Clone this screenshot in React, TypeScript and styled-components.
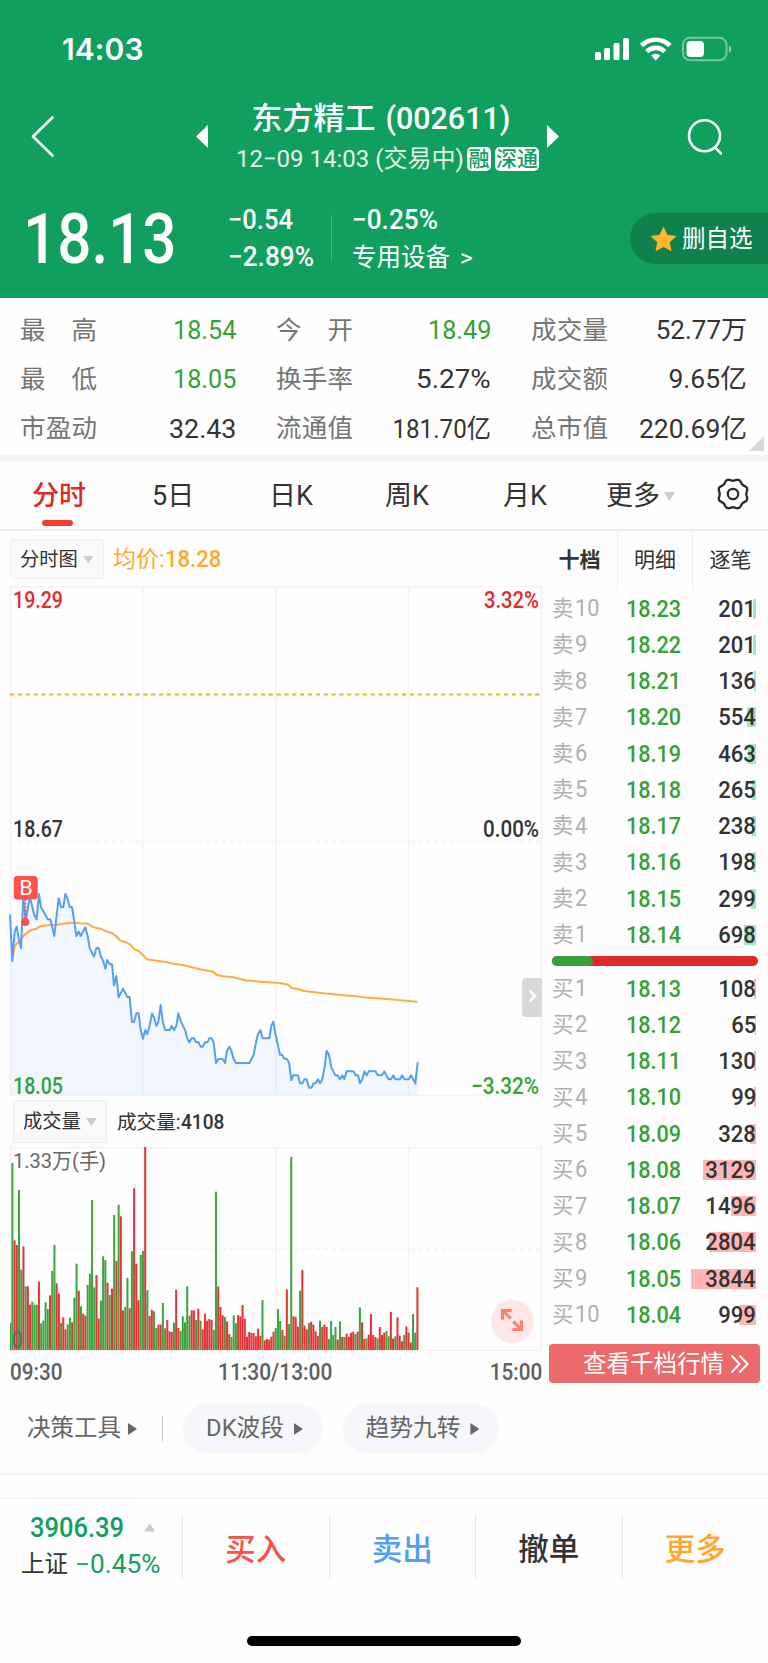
import React from 'react';
import styled, { createGlobalStyle, css } from 'styled-components';

const GREEN = '#119f5f';
const PRICE_GREEN = '#35a136';
const RED = '#e12828';
const ORANGE = '#ffa834';
const FONT = 'Roboto, "Noto Sans CJK SC", sans-serif';

const GlobalStyle = createGlobalStyle`
  * { box-sizing: border-box; }
  html, body { margin: 0; padding: 0; background: #fefefe; }
  body { font-family: ${FONT}; color: #333; }
`;

const Screen = styled.div`
  width: 768px;
  height: 1663px;
  display: flex;
  flex-direction: column;
  background: #fefefe;
  overflow: hidden;
  white-space: nowrap;
  line-height: 1;
`;

/* Narrow numerals: digits squeezed horizontally around their anchored side */
const Num = styled.span<{ $size: number; $sx?: number; $weight?: number; $right?: boolean; $color?: string }>`
  display: inline-block;
  font-size: ${p => p.$size}px;
  font-weight: ${p => p.$weight ?? 500};
  line-height: 1;
  color: ${p => p.$color ?? 'inherit'};
  transform: scaleX(${p => p.$sx ?? 1});
  transform-origin: ${p => (p.$right ? 'right' : 'left')} center;
`;

const Triangle = styled.i<{ $dir: 'down' | 'up' | 'right' | 'left'; $w: number; $h: number; $color: string }>`
  flex: none;
  width: ${p => p.$w}px;
  height: ${p => p.$h}px;
  background: ${p => p.$color};
  clip-path: ${p =>
    ({
      down: 'polygon(0 0, 100% 0, 50% 100%)',
      up: 'polygon(50% 0, 100% 100%, 0 100%)',
      right: 'polygon(0 0, 100% 50%, 0 100%)',
      left: 'polygon(100% 0, 100% 100%, 0 50%)',
    })[p.$dir]};
`;

/* ---------- header ---------- */

const Header = styled.header`
  height: 297.5px;
  flex: none;
  background: ${GREEN};
  color: #fff;
`;

const StatusBar = styled.div`
  height: 96px;
  padding: 2px 36px 0 62px;
  display: flex;
  align-items: center;
  justify-content: space-between;
`;

const Clock = styled.span`
  font: 600 30px/1 Inter, sans-serif;
  letter-spacing: 0.1px;
`;

const TitleBar = styled.div`
  height: 80px;
  padding: 0 46px 0 31px;
  display: grid;
  grid-template-columns: 165px 12px 1fr 12px 125px 38px;
  align-items: center;
`;

const TitleBlock = styled.div`
  padding-top: 2px;
  display: flex;
  flex-direction: column;
  align-items: center;
`;

const Title = styled.h1`
  margin: 0;
  font-size: 31px;
  font-weight: 500;
  line-height: 42px;
  padding-left: 7px;
`;

const Subtitle = styled.div`
  display: flex;
  align-items: center;
  height: 37px;
  padding-left: 20px;
  font-size: 24px;
  color: #e4f5ec;
`;

const Badge = styled.span`
  height: 24px;
  margin-left: 3.5px;
  padding: 0 1.2px;
  border-radius: 5px;
  background: #fff;
  color: ${GREEN};
  font-size: 21px;
  font-weight: 500;
  line-height: 24.500px;
  & + & { margin-left: 4px; }
`;

const Quote = styled.div`
  height: 121.5px;
  padding: 3.500px 0 0 23px;
  display: flex;
  align-items: center;
`;

const LastPrice = styled.div`
  width: 205px;
`;

const Pair = styled.div<{ $w: number }>`
  width: ${p => p.$w}px;
  height: 73px;
  display: flex;
  flex-direction: column;
  justify-content: space-between;
  > * { height: 36px; display: flex; align-items: center; }
`;

const QuoteDivider = styled.div`
  width: 1px;
  height: 47px;
  margin-right: 20px;
  background: #41b27f;
`;

const Sector = styled.div`
  padding-top: 3px;
  font-size: 24.5px;
  gap: 10px;
`;

const WatchButton = styled.button`
  width: 138px;
  height: 51px;
  margin-left: auto;
  padding: 0 0 0 20px;
  display: flex;
  align-items: center;
  gap: 5px;
  border: 0;
  border-radius: 26px 0 0 26px;
  background: #11804f;
  color: #fff;
  font: 400 23.5px/1 ${FONT};
  > span { padding-top: 2px; }
`;

/* ---------- key figures ---------- */

const Stats = styled.section`
  position: relative;
  height: 157.500px;
  flex: none;
  padding: 8px 20px 0 20px;
  display: grid;
  grid-template-columns: 216px 215px 216px;
  column-gap: 40px;
  grid-auto-rows: 49.3px;
`;

const Stat = styled.div`
  display: flex;
  align-items: center;
  justify-content: space-between;
  font-size: 25.5px;
`;

const StatLabel = styled.span`
  width: 77px;
  padding-top: 1px;
  display: flex;
  justify-content: space-between;
  color: #757575;
`;

const Fold = styled.i`
  position: absolute;
  right: 4px;
  bottom: 4px;
  width: 15px;
  height: 15px;
  background: #d8d8d8;
  clip-path: polygon(100% 0, 100% 100%, 0 100%);
`;

const Strip = styled.div`
  height: 6px;
  flex: none;
  background: #f1f3f8;
`;

/* ---------- period tabs ---------- */

const PeriodTabs = styled.nav`
  height: 70px;
  flex: none;
  padding: 0 18px 0 32px;
  display: grid;
  grid-template-columns: 120px 117px 116px 118px 103px 110px 34px;
  align-items: center;
  border-bottom: 2px solid #ededed;
`;

const PeriodTab = styled.div<{ $active?: boolean }>`
  position: relative;
  height: 68px;
  padding-top: 3px;
  display: flex;
  align-items: center;
  gap: 4px;
  font-size: 27px;
  color: #333;
  ${p =>
    p.$active &&
    css`
      color: ${RED};
      font-weight: 500;
      &::after {
        content: '';
        position: absolute;
        left: 10px;
        bottom: 3.500px;
        width: 31px;
        height: 6px;
        border-radius: 3px;
        background: #f63d30;
      }
    `}
`;

/* ---------- chart and order book ---------- */

const Main = styled.main`
  height: 858px;
  flex: none;
  display: flex;
`;

const ChartColumn = styled.div`
  width: 542px;
  padding-left: 10px;
  display: flex;
  flex-direction: column;
`;

const ChartBar = styled.div<{ $h: number; $left?: number; $gap: number; $top: number }>`
  height: ${p => p.$h}px;
  flex: none;
  padding: ${p => p.$top}px 0 0 ${p => p.$left ?? 0}px;
  display: flex;
  align-items: flex-start;
  gap: ${p => p.$gap}px;
`;

const Selector = styled.div<{ $h: number; $r: number }>`
  width: 94px;
  height: ${p => p.$h}px;
  padding: 1px 0 0 9px;
  display: flex;
  align-items: center;
  gap: 5px;
  border: 1px solid #efefef;
  border-radius: ${p => p.$r}px;
  background: #fafafa;
  font-size: 19.300px;
`;

const Average = styled.div`
  height: 40px;
  display: flex;
  align-items: center;
  color: ${ORANGE};
  font-size: 23px;
`;

const VolumeReadout = styled.div`
  height: 43px;
  padding-top: 2px;
  display: flex;
  align-items: center;
  font-size: 19.600px;
`;

const Plot = styled.div`
  position: relative;
  flex: none;
  > svg { display: block; overflow: visible; }
`;

const SideHandle = styled.button`
  position: absolute;
  right: 0;
  top: 392px;
  width: 20px;
  height: 39px;
  padding: 0;
  border: 0;
  border-radius: 4px 0 0 4px;
  background: #d8d8d8;
`;

const ExpandButton = styled.button`
  position: absolute;
  right: 8.500px;
  top: 152.500px;
  width: 43px;
  height: 43px;
  padding: 1px 0 0;
  border: 0;
  border-radius: 50%;
  background: #fee8e7;
`;

const TimeAxis = styled.div`
  height: 37px;
  padding-top: 6px;
  display: flex;
  align-items: center;
  justify-content: space-between;
  color: #5f5f5f;
`;

const AxisMiddle = styled.span`
  padding-left: 10px;
`;

const Book = styled.aside`
  width: 226px;
  display: flex;
  flex-direction: column;
`;

const BookTabs = styled.div`
  height: 59.5px;
  flex: none;
  display: grid;
  grid-template-columns: 75px 75px 76px;
`;

const BookTab = styled.div<{ $active?: boolean }>`
  display: flex;
  align-items: center;
  justify-content: center;
  font-size: 21px;
  font-weight: ${p => (p.$active ? 700 : 400)};
  color: #333;
  & + & { border-left: 1px solid #eee; }
`;

const BookRow = styled.div`
  height: 36.250px;
  flex: none;
  padding: 0 12px 0 10px;
  display: grid;
  grid-template-columns: 74px 60px 70px;
  align-items: center;
`;

const Level = styled.span`
  display: flex;
  align-items: center;
  gap: 1px;
  color: #b0b0b0;
  font-size: 21.5px;
`;

const Quantity = styled.span`
  position: relative;
  height: 20px;
  display: flex;
  align-items: center;
  justify-content: flex-end;
  > span { position: relative; }
`;

const Depth = styled.i<{ $sell: boolean }>`
  position: absolute;
  right: 0;
  top: 0;
  height: 20px;
  background: ${p => (p.$sell ? '#a4e6c4' : '#ffb5b3')};
`;

const Balance = styled.div`
  height: 10px;
  flex: none;
  margin: 2.500px 10px 5px;
  border-radius: 5px;
  overflow: hidden;
  display: flex;
  background: ${RED};
  &::before {
    content: '';
    width: 20%;
    border-radius: 0 5px 5px 0;
    background: ${PRICE_GREEN};
  }
`;

const DepthButton = styled.button`
  width: 211px;
  height: 39px;
  margin: 11px 0 0 7px;
  padding: 0 11px 0 0;
  display: flex;
  align-items: center;
  justify-content: flex-end;
  gap: 6px;
  border: 0;
  border-radius: 4px;
  background: #ec6a6a;
  color: #fff;
  font: 400 23.500px/1 ${FONT};
  > span { padding-top: 3px; }
`;

/* ---------- tools ---------- */

const Tools = styled.section`
  height: 85.5px;
  flex: none;
  padding: 15px 0 0 27px;
  display: flex;
  align-items: flex-start;
  border-bottom: 2px solid #eff1f5;
`;

const ToolLabel = styled.div`
  width: 135px;
  height: 49px;
  padding-top: 1px;
  display: flex;
  align-items: center;
  gap: 7px;
  font-size: 23.500px;
  color: #666;
`;

const ToolDivider = styled.div`
  width: 1px;
  height: 25px;
  margin: 12px 20px 0 0;
  background: #c4c4c4;
`;

const ToolChip = styled.div<{ $w: number }>`
  width: ${p => p.$w}px;
  height: 49px;
  margin-right: 20px;
  padding: 1px 0 0 3px;
  display: flex;
  align-items: center;
  justify-content: center;
  gap: 10px;
  border-radius: 25px;
  background: #f6f7fb;
  font-size: 23.700px;
  color: #666;
`;

/* ---------- bottom bar ---------- */

const BottomBar = styled.footer`
  height: 96px;
  margin-top: 23px;
  flex: none;
  padding-top: 16px;
  border-top: 1px solid #f0f0f3;
  display: grid;
  grid-template-columns: 182px 146.500px 146.500px 146.500px 146.500px;
`;

const IndexCell = styled.div`
  height: 68px;
  margin-top: -2px;
  display: flex;
  flex-direction: column;
`;

const IndexLine = styled.div<{ $left: number; $h: number; $gap?: number; $top?: number }>`
  height: ${p => p.$h}px;
  padding: ${p => p.$top ?? 0}px 0 0 ${p => p.$left}px;
  display: flex;
  align-items: center;
  gap: ${p => p.$gap ?? 0}px;
  color: ${GREEN};
`;

const IndexName = styled.span`
  width: 54px;
  color: #333;
  font-size: 23.500px;
`;

const Action = styled.div<{ $color: string }>`
  height: 63px;
  display: flex;
  align-items: center;
  justify-content: center;
  padding-top: 8px;
  border-left: 1px solid #e6e6e6;
  color: ${p => p.$color};
  font-size: 30.500px;
  font-weight: 500;
`;

const HomeIndicator = styled.div`
  width: 274px;
  height: 10px;
  margin: 42px auto 0;
  border-radius: 5px;
  background: #000;
`;

/* ---------- data ---------- */

/* label, value, horizontal scale, green */
const stats: [string, string, number, boolean?][] = [
  ['最高', '18.54', 0.97, true],
  ['今开', '18.49', 0.97, true],
  ['成交量', '52.77万', 1],
  ['最低', '18.05', 0.97, true],
  ['换手率', '5.27%', 1.07],
  ['成交额', '9.65亿', 1.02],
  ['市盈动', '32.43', 1.03],
  ['流通值', '181.70亿', 0.93],
  ['总市值', '220.69亿', 1.02],
];

const asks: [number, string, number][] = [
  [10, '18.23', 201], [9, '18.22', 201], [8, '18.21', 136], [7, '18.20', 554], [6, '18.19', 463],
  [5, '18.18', 265], [4, '18.17', 238], [3, '18.16', 198], [2, '18.15', 299], [1, '18.14', 698],
];

const bids: [number, string, number][] = [
  [1, '18.13', 108], [2, '18.12', 65], [3, '18.11', 130], [4, '18.10', 99], [5, '18.09', 328],
  [6, '18.08', 3129], [7, '18.07', 1496], [8, '18.06', 2804], [9, '18.05', 3844], [10, '18.04', 999],
];

/* Plot coordinates are in thirds of a pixel */
const priceLine =
  '30,163 37,303 44,215 50,200 57,240 63,265 70,110 77,184 84,140 90,112 97,142 103,165 110,178 117,102 123,142 130,153 143,178 151,178 ' +
  '163,228 170,165 176,115 183,141 190,141 196,102 203,117 209,141 216,141 222,178 229,228 236,214 242,228 256,202 263,228 269,264 ' +
  '282,290 289,264 296,264 302,288 309,301 316,326 322,300 329,313 336,313 342,376 349,348 356,412 369,386 382,411 389,411 396,486 ' +
  '402,486 409,460 416,460 422,510 429,536 436,510 442,523 449,496 456,460 462,472 469,498 475,486 482,435 488,484 495,510 509,510 ' +
  '515,498 522,510 529,497 535,460 542,484 555,510 562,535 568,547 575,535 582,535 588,546 595,546 602,560 608,560 615,547 622,547 ' +
  '628,535 635,535 641,547 648,609 655,597 668,597 675,609 681,572 688,560 694,572 701,597 708,609 748,609 761,584 768,547 774,522 ' +
  '781,510 788,535 808,535 814,497 820,485 826,520 840,584 846,584 853,596 860,596 867,608 874,660 880,646 894,646 900,670 907,670 ' +
  '913,658 920,658 927,683 934,683 941,670 947,670 954,658 960,670 967,658 974,620 980,572 987,585 994,622 1006,646 1013,646 ' +
  '1020,658 1027,646 1033,658 1040,634 1060,634 1067,646 1074,646 1080,670 1087,658 1093,634 1100,646 1106,634 1127,634 1133,646 ' +
  '1146,646 1153,634 1160,648 1166,658 1173,658 1180,646 1186,658 1200,658 1206,646 1213,658 1226,658 1233,646 1240,658 1246,671 1253,607';

const averageLine =
  '38,290 44,260 50,250 58,246 63,240 70,228 82,218 92,211 110,206 118,200 130,197 150,195 170,194 190,191 215,188 240,190 262,191 ' +
  '272,196 280,202 302,206 318,214 336,219 350,230 362,242 376,246 390,253 404,268 416,273 428,284 438,296 450,299 500,307 520,311 ' +
  '552,316 600,328 640,335 650,345 670,349 700,352 735,361 780,365 840,369 865,374 875,384 895,387 908,392 970,400 1030,406 ' +
  '1070,409 1090,412 1160,417 1252,425';

/* One entry per minute: direction and bar height */
const volumes = (
  'g81 g561 r329 r315 g480 g241 r311 g191 r191 r136 g145 g136 g136 r205 g80 g88 g143 g123 r164 g237 g315 r200 r170 g82 r98 r62 g77 ' +
  'g97 r83 g157 g259 r178 g131 r109 r103 g195 g229 g450 g188 r225 r94 g148 g281 g270 r202 g165 r184 g405 r267 g436 r401 r119 g129 ' +
  'g216 r125 g296 r485 r259 r149 g285 g297 r609 g179 r102 r121 g116 g66 r76 r76 g141 g65 r90 r56 r54 g82 r181 r66 g57 g101 g83 ' +
  'g191 g103 r119 r119 g90 r124 g88 r62 r109 r88 r93 r90 g61 g475 r191 r129 r104 g99 r86 r48 g39 g104 g80 r105 r101 r135 r94 r40 ' +
  'r54 r51 r51 r41 r64 r42 g150 r29 r33 r31 r40 r55 g66 g123 g87 r60 g43 r182 g78 g579 r101 r99 r70 g178 r240 r73 r62 g81 r85 r76 ' +
  'r56 r42 g88 r69 r76 r69 g33 g87 g45 g69 r31 g86 r39 g39 r49 r40 r52 r55 g48 r55 g128 r83 r33 g35 r46 r108 r45 r39 g35 r69 r45 ' +
  'r52 g57 g41 r114 r34 g41 r98 r43 r26 g45 r71 r52 r23 g108 g52 r188'
).split(' ');

/* ---------- icons ---------- */

const StatusIcons = () => (
  <svg width="138" height="26" viewBox="594 36 138 26" fill="#fff">
    <rect x="595" y="52" width="6" height="8" rx="1.6" />
    <rect x="604" y="48" width="6" height="12" rx="1.6" />
    <rect x="613.5" y="43" width="6" height="17" rx="1.6" />
    <rect x="623" y="38" width="6" height="22" rx="1.6" />
    <g fill="none" stroke="#fff" strokeWidth="4.6">
      <path d="M641.5 45.5a20.5 20.5 0 0 1 28.500 0" />
      <path d="M646.8 51.6a12.8 12.8 0 0 1 18 0" />
    </g>
    <path d="M655.8 60.5l-4.6-4.9a6.6 6.6 0 0 1 9.2 0z" />
    <rect x="683" y="37.8" width="43.5" height="22.4" rx="7" fill="none" stroke="#fff" strokeOpacity=".42" strokeWidth="2" />
    <rect x="686.5" y="41" width="17.5" height="16" rx="4" />
    <path d="M729 45.5c3 1 3 6.500 0 7.500z" fillOpacity=".5" />
  </svg>
);

const Back = () => (
  <svg width="26" height="44" viewBox="0 0 26 44" fill="none" stroke="#fff" strokeWidth="2.6" strokeLinecap="round" strokeLinejoin="round">
    <path d="M21.500 2.500L2 21.500L21.500 40.500" />
  </svg>
);

const Search = () => (
  <svg width="38" height="40" viewBox="0 0 38 40" fill="none" stroke="#fff" strokeWidth="2.600" strokeLinecap="round">
    <circle cx="20.500" cy="18.800" r="15.500" />
    <path d="M31.500 30.800L37 36.500" />
  </svg>
);

const Star = () => (
  <svg width="27" height="26" viewBox="0 0 27 26">
    <path d="M13.500 .5l3.900 8.300 9.100 1.200-6.700 6.300 1.700 9-8-4.400-8 4.400 1.700-9L.5 10l9.100-1.200z" fill="#ffb52c" />
  </svg>
);

/* Eight shallow lobes around the hub */
const gearOutline = Array.from({ length: 96 }, (_, i) => {
  const t = (i / 96) * Math.PI * 2;
  const r = 14.2 - 0.95 * Math.cos(8 * t);
  return `${(17 + r * Math.cos(t)).toFixed(2)},${(17 + r * Math.sin(t)).toFixed(2)}`;
}).join(' ');

const GearSvg = styled.svg`
  margin-bottom: 2px;
`;

const Gear = () => (
  <GearSvg width="34" height="34" viewBox="0 0 34 34" fill="none" stroke="#2b2b2b" strokeWidth="2.3" strokeLinejoin="round">
    <polygon points={gearOutline} />
    <circle cx="17" cy="17" r="5.2" />
  </GearSvg>
);

const DoubleChevron = () => (
  <svg width="19" height="20" viewBox="0 0 19 20" fill="none" stroke="#fff" strokeWidth="2">
    <path d="M1.500 1.500L9.500 10L1.500 18.500M9.500 1.500L17.500 10L9.500 18.500" />
  </svg>
);

/* ---------- charts ---------- */

const Label = styled.text<{ $size?: number }>`
  font-family: ${FONT};
  font-size: ${p => p.$size ?? 23}px;
`;

const PriceChart = () => (
  <svg width="532" height="510" viewBox="0 0 532 510">
    <g fill="none" stroke="#f3f3f5" strokeWidth="1.500">
      <rect x=".5" y=".7" width="531" height="508.500" />
      <path d="M133 0V509M265.700 0V509M398.500 0V509" />
      <path d="M0 255.300H532" strokeDasharray="4 3.850" />
    </g>
    <path d="M0 108.500H532" stroke={ORANGE} strokeWidth="2" strokeDasharray="4.200 3.640" />
    <g transform="translate(-10 274) scale(.33333)" fill="none" strokeLinejoin="round">
      <polygon points={`30,705 ${priceLine} 1253,705`} fill="#4f9bf5" fillOpacity=".075" />
      <polyline points={averageLine} stroke="#ffac45" strokeWidth="6.200" />
      <polyline points={priceLine} stroke="#559ff3" strokeWidth="6" />
    </g>
    <path d="M15.500 313V335" stroke="#ff5148" strokeWidth="2" strokeDasharray="2 1.500" />
    <circle cx="15.300" cy="336" r="4" fill="#ff5148" />
    <rect x="3.700" y="290" width="24" height="23.500" rx="3.500" fill="#ff5148" />
    <Label x="9.200" y="309" $size={20} fill="#fff" textLength="13.500" lengthAdjust="spacingAndGlyphs">B</Label>
    <Label x="3" y="21.500" fill="#e42a2d" fontWeight="500" textLength="50" lengthAdjust="spacingAndGlyphs">19.29</Label>
    <Label x="474" y="21.500" fill="#e42a2d" fontWeight="500" textLength="55" lengthAdjust="spacingAndGlyphs">3.32%</Label>
    <Label x="3" y="250.500" fill="#333" fontWeight="500" textLength="50" lengthAdjust="spacingAndGlyphs">18.67</Label>
    <Label x="473" y="250.500" fill="#333" fontWeight="500" textLength="56" lengthAdjust="spacingAndGlyphs">0.00%</Label>
    <Label x="3" y="507.500" fill={PRICE_GREEN} fontWeight="500" textLength="50" lengthAdjust="spacingAndGlyphs">18.05</Label>
    <Label x="461" y="507.500" fill={PRICE_GREEN} fontWeight="500" textLength="68" lengthAdjust="spacingAndGlyphs">−3.32%</Label>
  </svg>
);

const VolumeChart = () => (
  <svg width="532" height="204" viewBox="0 0 532 204">
    <g fill="none" stroke="#f2f2f4" strokeWidth="1.300">
      <rect x=".5" y=".6" width="531" height="202.800" />
      <path d="M133 0V203M265.700 0V203M398.500 0V203" />
      <path d="M0 101.500H532" strokeDasharray="4 3.850" />
    </g>
    <g transform="scale(.33333)">
      {volumes.map((v, i) => {
        const h = Number(v.slice(1));
        return (
          <rect key={i} x={Math.max(0, 6.64 * i - 2.5)} y={609 - h} width={i ? 6 : 4} height={h} fill={v[0] === 'g' ? '#3ca43e' : '#e63235'} />
        );
      })}
    </g>
    <Label x="3" y="20.500" $size={21} fill="#666" textLength="93" lengthAdjust="spacingAndGlyphs">1.33万(手)</Label>
    <Label x="2" y="200.500" fill="#666" textLength="11" lengthAdjust="spacingAndGlyphs">0</Label>
  </svg>
);

const Rows = ({ side, rows }: { side: '卖' | '买'; rows: [number, string, number][] }) => (
  <>
    {rows.map(([level, price, qty]) => (
      <BookRow key={level}>
        <Level>
          {side}
          <Num $size={23} $weight={400} $sx={0.95}>{level}</Num>
        </Level>
        <Num $size={24} $sx={0.9} $color={PRICE_GREEN}>{price}</Num>
        <Quantity>
          <Depth $sell={side === '卖'} style={{ width: Math.max(1, (qty * 65) / 3844) }} />
          <Num $size={24} $sx={0.92} $right>{qty}</Num>
        </Quantity>
      </BookRow>
    ))}
  </>
);

export default function App() {
  return (
    <Screen>
      <GlobalStyle />
      <Header>
        <StatusBar>
          <Clock>14:03</Clock>
          <StatusIcons />
        </StatusBar>
        <TitleBar>
          <Back />
          <Triangle $dir="left" $w={12} $h={23} $color="#fff" />
          <TitleBlock>
            <Title>东方精工 <Num $size={31} $sx={0.98} $right>(002611)</Num></Title>
            <Subtitle>
              12−09 14:03 (交易中)
              <Badge>融</Badge>
              <Badge>深通</Badge>
            </Subtitle>
          </TitleBlock>
          <Triangle $dir="right" $w={12} $h={23} $color="#fff" />
          <span />
          <Search />
        </TitleBar>
        <Quote>
          <LastPrice><Num $size={70} $sx={0.86}>18.13</Num></LastPrice>
          <Pair $w={103}>
            <div><Num $size={28} $sx={0.91}>−0.54</Num></div>
            <div><Num $size={28} $sx={0.935}>−2.89%</Num></div>
          </Pair>
          <QuoteDivider />
          <Pair $w={160}>
            <div><Num $size={28} $sx={0.935}>−0.25%</Num></div>
            <Sector>专用设备 <span>&gt;</span></Sector>
          </Pair>
          <WatchButton><Star /><span>删自选</span></WatchButton>
        </Quote>
      </Header>

      <Stats>
        {stats.map(([label, value, sx, green]) => (
          <Stat key={label}>
            <StatLabel>{[...label].map(c => <span key={c}>{c}</span>)}</StatLabel>
            <Num $size={26} $weight={400} $sx={sx} $right $color={green ? PRICE_GREEN : '#333'}>{value}</Num>
          </Stat>
        ))}
        <Fold />
      </Stats>
      <Strip />

      <PeriodTabs>
        <PeriodTab $active>分时</PeriodTab>
        <PeriodTab>5日</PeriodTab>
        <PeriodTab>日K</PeriodTab>
        <PeriodTab>周K</PeriodTab>
        <PeriodTab>月K</PeriodTab>
        <PeriodTab>更多<Triangle $dir="down" $w={11} $h={9} $color="#ccc" /></PeriodTab>
        <Gear />
      </PeriodTabs>

      <Main>
        <ChartColumn>
          <ChartBar $h={55} $top={8} $gap={9}>
            <Selector $h={40} $r={3}>分时图<Triangle $dir="down" $w={11} $h={8} $color="#ccc" /></Selector>
            <Average>均价:<Num $size={24} $sx={0.92}>18.28</Num></Average>
          </ChartBar>
          <Plot>
            <PriceChart />
            <SideHandle>
              <svg width="9" height="14" viewBox="0 0 9 14" fill="none" stroke="#fff" strokeWidth="2.500">
                <path d="M1.500 1.500L7 7L1.500 12.500" />
              </svg>
            </SideHandle>
          </Plot>
          <ChartBar $h={51} $top={4} $left={3} $gap={10}>
            <Selector $h={43} $r={0}>成交量<Triangle $dir="down" $w={11} $h={8} $color="#ccc" /></Selector>
            <VolumeReadout>成交量:<Num $size={21} $sx={0.91}>4108</Num></VolumeReadout>
          </ChartBar>
          <Plot>
            <VolumeChart />
            <ExpandButton>
              <svg width="24" height="24" viewBox="0 0 24 24" fill="none" stroke="#ff7c6e" strokeWidth="3">
                <path d="M11.500 2.500H2.500V11.500M2.500 2.500L10.800 10.500M12.500 21.500H21.500V12.500M21.500 21.500L13.200 13.500" />
              </svg>
            </ExpandButton>
          </Plot>
          <TimeAxis>
            <Num $size={23} $sx={0.9}>09:30</Num>
            <AxisMiddle><Num $size={23} $sx={0.91}>11:30/13:00</Num></AxisMiddle>
            <Num $size={23} $sx={0.9} $right>15:00</Num>
          </TimeAxis>
        </ChartColumn>
        <Book>
          <BookTabs>
            <BookTab $active>十档</BookTab>
            <BookTab>明细</BookTab>
            <BookTab>逐笔</BookTab>
          </BookTabs>
          <Rows side="卖" rows={asks} />
          <Balance />
          <Rows side="买" rows={bids} />
          <DepthButton><span>查看千档行情</span><DoubleChevron /></DepthButton>
        </Book>
      </Main>

      <Tools>
        <ToolLabel>决策工具<Triangle $dir="right" $w={9} $h={12} $color="#666" /></ToolLabel>
        <ToolDivider />
        <ToolChip $w={140}>DK波段<Triangle $dir="right" $w={9} $h={12} $color="#666" /></ToolChip>
        <ToolChip $w={156}>趋势九转<Triangle $dir="right" $w={9} $h={12} $color="#666" /></ToolChip>
      </Tools>

      <BottomBar>
        <IndexCell>
          <IndexLine $left={30} $h={30} $gap={11}>
            <Num $size={28} $sx={0.91}>3906.39</Num>
            <Triangle $dir="up" $w={11} $h={8} $color="#ccc" />
          </IndexLine>
          <IndexLine $left={21} $h={38} $top={6}>
            <IndexName>上证</IndexName>
            <Num $size={25} $weight={400} $sx={1.05}>−0.45%</Num>
          </IndexLine>
        </IndexCell>
        <Action $color="#ff5046">买入</Action>
        <Action $color="#539df7">卖出</Action>
        <Action $color="#333">撤单</Action>
        <Action $color="#ffa530">更多</Action>
      </BottomBar>
      <HomeIndicator />
    </Screen>
  );
}
